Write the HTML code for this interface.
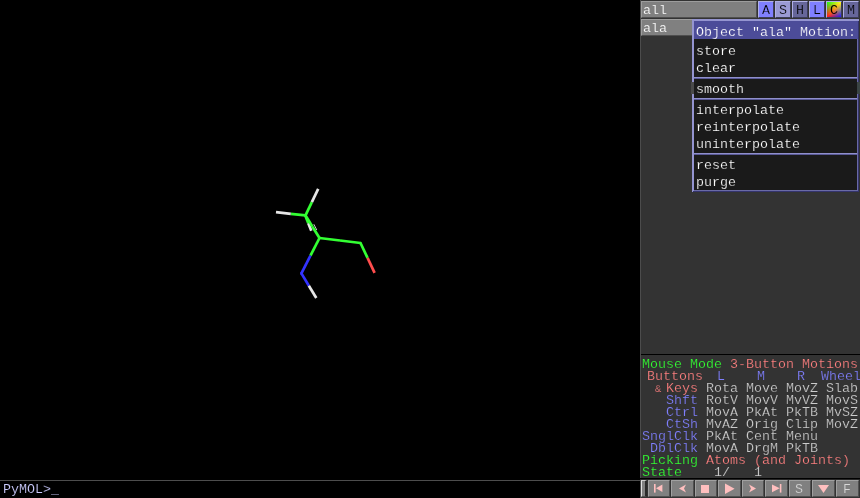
<!DOCTYPE html>
<html><head><meta charset="utf-8"><title>PyMOL</title>
<style>
html,body{margin:0;padding:0;background:#000;}
body{width:860px;height:498px;position:relative;overflow:hidden;font-family:"Liberation Mono","DejaVu Sans Mono",monospace;font-size:13.33px;line-height:12px;}
.abs{position:absolute;}
.t{position:absolute;white-space:pre;will-change:transform;font-size:13.333px;line-height:12px;height:12px;letter-spacing:0;}
.t{-webkit-text-stroke:0.2px #333333}
.p{color:#fff;-webkit-text-stroke:0.2px #1a1a1a}
.pt{color:#fff;-webkit-text-stroke:0.2px #4c4c99}
.rw{color:#fff;-webkit-text-stroke:0.2px #808080}
.k{-webkit-text-stroke:0.15px #000}
.cbt{color:#d8d8d8;-webkit-text-stroke:0.2px #808080}
.g{color:#33ff33}.r{color:#ff8080}.b{color:#8080ff}.w{color:#cccccc}
#panel{left:640px;top:0;width:220px;height:498px;background:#333333;box-shadow:inset 1px 0 0 #4c4c4c;}
.row{position:absolute;background:#808080;box-sizing:border-box;border-top:1px solid #9d9d9d;border-left:1px solid #9d9d9d;border-bottom:1px solid #4f4f4f;border-right:1px solid #4f4f4f;}
.btn{position:absolute;top:1px;width:16px;height:17px;box-sizing:border-box;border-top:1px solid #b0b0e6;border-left:1px solid #b0b0e6;border-bottom:1px solid #3c3c5a;border-right:1px solid #3c3c5a;color:#000;text-align:center;}
.btn span{position:absolute;left:3px;top:3px;font-size:13.333px;line-height:12px;will-change:transform;}
.cb{position:absolute;top:480px;height:17px;background:#808080;box-sizing:border-box;border-top:1px solid #a0a0a0;border-left:1px solid #a0a0a0;border-bottom:1px solid #505050;border-right:1px solid #505050;}
.cb svg{position:absolute;left:-1px;top:-1px;}
</style></head><body>

<!-- molecule viewport -->
<svg class="abs" style="left:0;top:0" width="640" height="480" viewBox="0 0 640 480">
 <g fill="none" stroke-width="2.7" stroke-linecap="butt">
  <line x1="313.8" y1="224.2" x2="316.8" y2="230" stroke="#c8c8c8" stroke-width="1"/>
  <line x1="305.3" y1="215.6" x2="308.3" y2="223.3" stroke="#33ff33"/>
  <line x1="308.3" y1="223.3" x2="311.3" y2="230.8" stroke="#e6e6e6"/>
  <line x1="305.5" y1="215.4" x2="311.85" y2="202.1" stroke="#33ff33"/>
  <line x1="311.85" y1="202.1" x2="318.2" y2="188.8" stroke="#e6e6e6"/>
  <line x1="305.5" y1="215.4" x2="290.75" y2="213.8" stroke="#33ff33"/>
  <line x1="290.75" y1="213.8" x2="276" y2="212.2" stroke="#e6e6e6"/>
  <line x1="305.5" y1="215.4" x2="312.5" y2="226.7" stroke="#33ff33"/>
  <line x1="312.5" y1="226.7" x2="319.5" y2="238" stroke="#33ff33"/>
  <line x1="319.5" y1="238" x2="340" y2="240.5" stroke="#33ff33"/>
  <line x1="340" y1="240.5" x2="360.5" y2="243" stroke="#33ff33"/>
  <line x1="360.5" y1="243" x2="367.55" y2="257.9" stroke="#33ff33"/>
  <line x1="367.55" y1="257.9" x2="374.6" y2="272.8" stroke="#ff4d4d"/>
  <line x1="319.5" y1="238" x2="310.45" y2="255.7" stroke="#33ff33"/>
  <line x1="310.45" y1="255.7" x2="301.4" y2="273.4" stroke="#3333ff"/>
  <line x1="301.4" y1="273.4" x2="308.85" y2="285.7" stroke="#3333ff"/>
  <line x1="308.85" y1="285.7" x2="316.3" y2="298" stroke="#e6e6e6"/>
 </g>
 <circle cx="319.5" cy="238" r="1.35" fill="#33ff33"/>
 <circle cx="305.5" cy="215.4" r="1.35" fill="#33ff33"/>
 <circle cx="360.5" cy="243" r="1.35" fill="#33ff33"/>
 <circle cx="301.4" cy="273.4" r="1.35" fill="#3333ff"/>
</svg>

<!-- command line -->
<div class="abs" style="left:0;top:480px;width:640px;height:1px;background:#4d4d4d"></div>
<div class="t k" style="left:3px;top:484px;color:#ccccff">PyMOL&gt;_</div>

<!-- right panel -->
<div class="abs" id="panel">
 <!-- object rows -->
 <div class="row" style="left:1px;top:1px;width:116px;height:17px"></div>
 <div class="t rw" style="left:3px;top:5px">all</div>
 <div class="row" style="left:1px;top:19px;width:116px;height:17px"></div>
 <div class="t rw" style="left:3px;top:23px">ala</div>

 <div class="btn" style="left:118px;background:#8080ff"><span style="-webkit-text-stroke:0.2px #8080ff">A</span></div>
 <div class="btn" style="left:135px;background:#9a9ad4"><span style="-webkit-text-stroke:0.2px #9a9ad4">S</span></div>
 <div class="btn" style="left:152px;background:#666699"><span style="-webkit-text-stroke:0.2px #666699">H</span></div>
 <div class="btn" style="left:169px;background:#8080ff"><span style="-webkit-text-stroke:0.2px #8080ff">L</span></div>
 <div class="btn" style="left:186px;background:#808080;overflow:hidden">
  <svg style="position:absolute;left:0;top:0" width="14" height="15" viewBox="0 0 14 15"><defs><linearGradient id="c0"><stop offset="0" stop-color="#21f71a"/><stop offset="0.967" stop-color="#fff71a"/><stop offset="1" stop-color="#f7f721"/></linearGradient><linearGradient id="c1"><stop offset="0" stop-color="#30e81a"/><stop offset="0.900" stop-color="#ffe81a"/><stop offset="1" stop-color="#e8e830"/></linearGradient><linearGradient id="c2"><stop offset="0" stop-color="#40d91a"/><stop offset="0.833" stop-color="#ffd91a"/><stop offset="1" stop-color="#d9d940"/></linearGradient><linearGradient id="c3"><stop offset="0" stop-color="#4fc91a"/><stop offset="0.767" stop-color="#ffc91a"/><stop offset="1" stop-color="#c9c94f"/></linearGradient><linearGradient id="c4"><stop offset="0" stop-color="#5eba1a"/><stop offset="0.700" stop-color="#ffba1a"/><stop offset="1" stop-color="#baba5e"/></linearGradient><linearGradient id="c5"><stop offset="0" stop-color="#6eab1a"/><stop offset="0.633" stop-color="#ffab1a"/><stop offset="1" stop-color="#abab6e"/></linearGradient><linearGradient id="c6"><stop offset="0" stop-color="#7d9c1a"/><stop offset="0.567" stop-color="#ff9c1a"/><stop offset="1" stop-color="#9c9c7d"/></linearGradient><linearGradient id="c7"><stop offset="0" stop-color="#8c8c1a"/><stop offset="0.500" stop-color="#ff8c1a"/><stop offset="1" stop-color="#8c8c8c"/></linearGradient><linearGradient id="c8"><stop offset="0" stop-color="#9c7d1a"/><stop offset="0.433" stop-color="#ff7d1a"/><stop offset="1" stop-color="#7d7d9c"/></linearGradient><linearGradient id="c9"><stop offset="0" stop-color="#ab6e1a"/><stop offset="0.367" stop-color="#ff6e1a"/><stop offset="1" stop-color="#6e6eab"/></linearGradient><linearGradient id="c10"><stop offset="0" stop-color="#ba5e1a"/><stop offset="0.300" stop-color="#ff5e1a"/><stop offset="1" stop-color="#5e5eba"/></linearGradient><linearGradient id="c11"><stop offset="0" stop-color="#c94f1a"/><stop offset="0.233" stop-color="#ff4f1a"/><stop offset="1" stop-color="#4f4fc9"/></linearGradient><linearGradient id="c12"><stop offset="0" stop-color="#d9401a"/><stop offset="0.167" stop-color="#ff401a"/><stop offset="1" stop-color="#4040d9"/></linearGradient><linearGradient id="c13"><stop offset="0" stop-color="#e8301a"/><stop offset="0.100" stop-color="#ff301a"/><stop offset="1" stop-color="#3030e8"/></linearGradient><linearGradient id="c14"><stop offset="0" stop-color="#f7211a"/><stop offset="0.033" stop-color="#ff211a"/><stop offset="1" stop-color="#2121f7"/></linearGradient></defs><rect x="0" y="0" width="14" height="1.05" fill="url(#c0)"/><rect x="0" y="1" width="14" height="1.05" fill="url(#c1)"/><rect x="0" y="2" width="14" height="1.05" fill="url(#c2)"/><rect x="0" y="3" width="14" height="1.05" fill="url(#c3)"/><rect x="0" y="4" width="14" height="1.05" fill="url(#c4)"/><rect x="0" y="5" width="14" height="1.05" fill="url(#c5)"/><rect x="0" y="6" width="14" height="1.05" fill="url(#c6)"/><rect x="0" y="7" width="14" height="1.05" fill="url(#c7)"/><rect x="0" y="8" width="14" height="1.05" fill="url(#c8)"/><rect x="0" y="9" width="14" height="1.05" fill="url(#c9)"/><rect x="0" y="10" width="14" height="1.05" fill="url(#c10)"/><rect x="0" y="11" width="14" height="1.05" fill="url(#c11)"/><rect x="0" y="12" width="14" height="1.05" fill="url(#c12)"/><rect x="0" y="13" width="14" height="1.05" fill="url(#c13)"/><rect x="0" y="14" width="14" height="1.05" fill="url(#c14)"/></svg><span>C</span></div>
 <div class="btn" style="left:203px;background:#666699"><span style="-webkit-text-stroke:0.2px #666699">M</span></div>

 <!-- popup menu -->
 <div class="abs" style="left:52px;top:19px;width:167px;height:173px;background:#9494d0"></div>
 <div class="abs" style="left:217px;top:39px;width:1px;height:152px;background:#6a6aa6"></div>
 <div class="abs" style="left:218px;top:21px;width:1px;height:171px;background:#34346c"></div>
 <div class="abs" style="left:54px;top:190px;width:164px;height:1px;background:#6a6aa6"></div>
 <div class="abs" style="left:53px;top:191px;width:166px;height:1px;background:#34346c"></div>
 <div class="abs" style="left:54px;top:21px;width:164px;height:18px;background:#4c4c99"></div>
 <div class="abs" style="left:54px;top:39px;width:163px;height:151px;background:#1a1a1a"></div>
 <div class="abs" style="left:54px;top:77px;width:163px;height:1px;background:#9090cc"></div>
 <div class="abs" style="left:54px;top:78px;width:163px;height:1px;background:#5a5a98"></div>
 <div class="abs" style="left:54px;top:98px;width:163px;height:1px;background:#9090cc"></div>
 <div class="abs" style="left:54px;top:99px;width:163px;height:1px;background:#5a5a98"></div>
 <div class="abs" style="left:54px;top:153px;width:163px;height:1px;background:#9090cc"></div>
 <div class="abs" style="left:54px;top:154px;width:163px;height:1px;background:#5a5a98"></div>
 <div class="abs" style="left:51px;top:82px;width:3px;height:12px;background:#4a4a4a"></div>
 <div class="abs" style="left:217px;top:82px;width:3px;height:12px;background:#3a4444"></div>
 <div class="t pt" style="left:56px;top:27px">Object "ala" Motion:</div>
 <div class="t p" style="left:56px;top:46px">store</div>
 <div class="t p" style="left:56px;top:63px">clear</div>
 <div class="t p" style="left:56px;top:84px">smooth</div>
 <div class="t p" style="left:56px;top:105px">interpolate</div>
 <div class="t p" style="left:56px;top:122px">reinterpolate</div>
 <div class="t p" style="left:56px;top:139px">uninterpolate</div>
 <div class="t p" style="left:56px;top:160px">reset</div>
 <div class="t p" style="left:56px;top:177px">purge</div>

 <!-- mouse mode panel -->
 <div class="abs" style="left:1px;top:354px;width:219px;height:1px;background:#000"></div>
 <div class="t g" style="left:2px;top:359px">Mouse Mode</div>
 <div class="t r" style="left:90px;top:359px">3-Button Motions</div>
 <div class="t r" style="left:7px;top:371px">Buttons</div>
 <div class="t b" style="left:77px;top:371px">L    M    R  Wheel</div>
 <div class="t r" style="left:14.5px;top:383px;font-size:10.5px">&amp;</div>
 <div class="t r" style="left:26px;top:383px">Keys</div>
 <div class="t w" style="left:66px;top:383px">Rota Move MovZ Slab</div>
 <div class="t b" style="left:26px;top:395px">Shft</div>
 <div class="t w" style="left:66px;top:395px">RotV MovV MvVZ MovS</div>
 <div class="t b" style="left:26px;top:407px">Ctrl</div>
 <div class="t w" style="left:66px;top:407px">MovA PkAt PkTB MvSZ</div>
 <div class="t b" style="left:26px;top:419px">CtSh</div>
 <div class="t w" style="left:66px;top:419px">MvAZ Orig Clip MovZ</div>
 <div class="t b" style="left:2px;top:431px">SnglClk</div>
 <div class="t w" style="left:66px;top:431px">PkAt Cent Menu</div>
 <div class="t b" style="left:9.5px;top:443px">DblClk</div>
 <div class="t w" style="left:66px;top:443px">MovA DrgM PkTB</div>
 <div class="t g" style="left:2px;top:455px">Picking</div>
 <div class="t r" style="left:66px;top:455px">Atoms (and Joints)</div>
 <div class="t g" style="left:2px;top:467px">State</div>
 <div class="t w" style="left:50px;top:467px">   1/   1</div>
 <div class="abs" style="left:0;top:478px;width:220px;height:1px;background:#000"></div>
 <div class="abs" style="left:0;top:479px;width:220px;height:1px;background:#262626"></div>
</div>

<!-- control buttons -->
<div class="cb" style="left:641px;width:6px;border-left-color:#e0e0e0;border-top-color:#d0d0d0;border-right:2px solid #2a2a2a"></div>
<div class="cb" style="left:648px;width:22px"><svg width="22" height="17"><rect x="6" y="4" width="1.6" height="8.6" fill="#ffbfbf"/><path d="M8 8.3l6.4-3.8v7.6z" fill="#ffbfbf"/></svg></div>
<div class="cb" style="left:671px;width:23px"><svg width="23" height="17"><path d="M8 8.5l7-4-2 4 2 4z" fill="#ffbfbf"/></svg></div>
<div class="cb" style="left:695px;width:22px"><svg width="22" height="17"><rect x="6" y="5" width="8" height="8" fill="#ffbfbf"/></svg></div>
<div class="cb" style="left:718px;width:23px"><svg width="23" height="17"><path d="M7 3.4l9.6 5.3-9.6 5.3z" fill="#ffbfbf"/></svg></div>
<div class="cb" style="left:742px;width:22px"><svg width="22" height="17"><path d="M14 8.5l-7-4 2 4-2 4z" fill="#ffbfbf"/></svg></div>
<div class="cb" style="left:765px;width:23px"><svg width="23" height="17"><rect x="14.8" y="4" width="1.6" height="8.6" fill="#ffbfbf"/><path d="M14.8 8.3l-7.8-3.8v7.8z" fill="#ffbfbf"/></svg></div>
<div class="cb" style="left:789px;width:22px"><div class="t cbt" style="left:5px;top:3px">S</div></div>
<div class="cb" style="left:812px;width:23px"><svg width="23" height="17"><path d="M6 5h11l-5.5 8z" fill="#ffbfbf"/></svg></div>
<div class="cb" style="left:836px;width:23px"><div class="t cbt" style="left:6px;top:3px">F</div></div>

</body></html>
